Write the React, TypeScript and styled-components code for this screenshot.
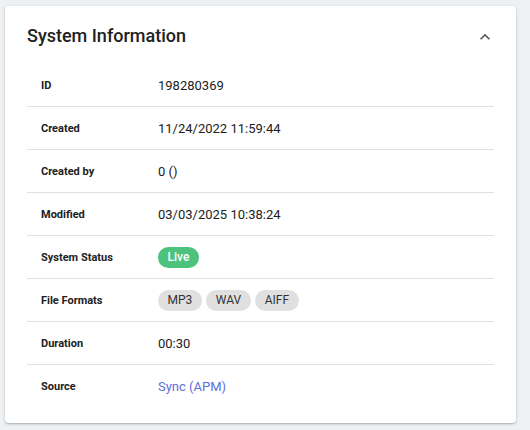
import { createGlobalStyle, styled } from "styled-components";

const GlobalStyle = createGlobalStyle`
  html, body {
    margin: 0;
    background: #eef1f4;
    font-family: Roboto, "Liberation Sans", Arial, sans-serif;
  }
`;

const Page = styled.div`
  padding: 6px 14px 8px 5px;
`;

const Card = styled.section`
  background: #fff;
  border-radius: 4px;
  box-shadow: 0 1px 3px rgba(0, 0, 0, 0.22), 0 1px 1px rgba(0, 0, 0, 0.08);
  padding: 0 22px 14px 22px;
  height: 417px;
  box-sizing: border-box;
`;

const Header = styled.div`
  display: flex;
  align-items: center;
  justify-content: space-between;
  height: 58px;

  h2 {
    margin: 0;
    font-size: 18px;
    font-weight: 500;
    color: #212121;
  }
`;

const Collapse = styled.button`
  border: 0;
  background: none;
  padding: 0;
  width: 22px;
  height: 22px;
  display: flex;
  align-items: center;
  justify-content: center;
  color: #555;
  margin-right: -2px;
  margin-top: 4px;
`;

const Rows = styled.dl`
  margin: 0;
`;

const Row = styled.div<{ $last?: boolean }>`
  display: grid;
  grid-template-columns: 117px 1fr;
  align-items: center;
  height: 43px;
  padding-left: 14px;
  border-bottom: ${(p) => (p.$last ? "0" : "1px solid #e0e0e0")};
  box-sizing: border-box;

  dt {
    font-size: 11px;
    font-weight: 700;
    color: #212121;
  }
  dd {
    margin: 0;
    font-size: 13px;
    color: #212121;
    display: flex;
    gap: 4.5px;
  }
`;

const Chip = styled.span<{ $tone?: "live" | "plain" }>`
  display: inline-flex;
  align-items: center;
  height: 21px;
  padding: 0 9.5px;
  border-radius: 11px;
  font-size: 12px;
  background: ${(p) => (p.$tone === "live" ? "#4cc27c" : "#e0e0e0")};
  color: ${(p) => (p.$tone === "live" ? "#fff" : "#333")};
  font-weight: ${(p) => (p.$tone === "live" ? 500 : 400)};
`;

const SourceLink = styled.a`
  color: #5c6ee0;
  text-decoration: none;
`;

const info: [string, React.ReactNode][] = [
  ["ID", "198280369"],
  ["Created", "11/24/2022 11:59:44"],
  ["Created by", "0 ()"],
  ["Modified", "03/03/2025 10:38:24"],
  ["System Status", <Chip $tone="live">Live</Chip>],
  [
    "File Formats",
    <>
      <Chip>MP3</Chip>
      <Chip>WAV</Chip>
      <Chip>AIFF</Chip>
    </>,
  ],
  ["Duration", "00:30"],
  ["Source", <SourceLink href="#">Sync (APM)</SourceLink>],
];

export default function App() {
  return (
    <>
      <GlobalStyle />
      <Page>
        <Card>
          <Header>
            <h2>System Information</h2>
            <Collapse aria-label="Collapse">
              <svg width="20" height="20" viewBox="0 0 24 24" fill="currentColor">
                <path d="M7.41 15.41 12 10.83l4.59 4.58L18 14l-6-6-6 6z" />
              </svg>
            </Collapse>
          </Header>
          <Rows>
            {info.map(([label, value], i) => (
              <Row key={label} $last={i === info.length - 1}>
                <dt>{label}</dt>
                <dd>{value}</dd>
              </Row>
            ))}
          </Rows>
        </Card>
      </Page>
    </>
  );
}
